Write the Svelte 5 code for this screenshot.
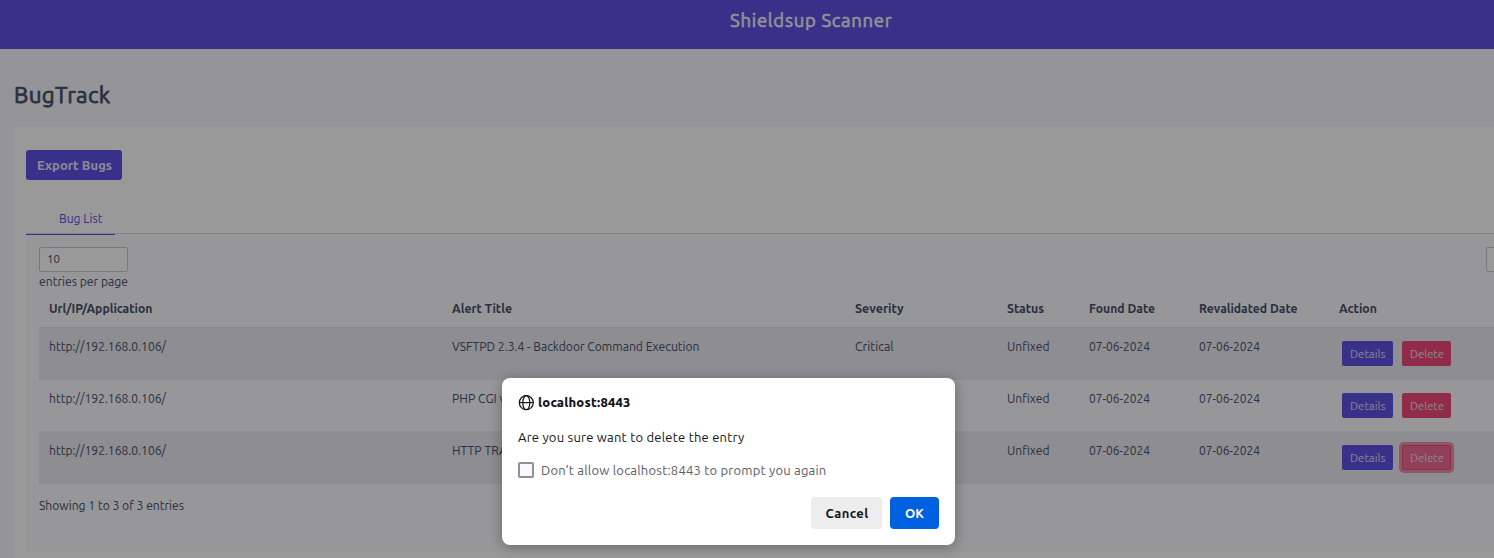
<script>
  const columns = [
    { label: 'Url/IP/Application', w: 103.5 },
    { label: 'Alert Title', w: 60 },
    { label: 'Severity', w: 48.5 },
    { label: 'Status', w: 37 },
    { label: 'Found Date', w: 66 },
    { label: 'Revalidated Date', w: 98.5 },
    { label: 'Action', w: 38 }
  ];
  const bugs = [
    { title: 'VSFTPD 2.3.4 - Backdoor Command Execution', w: 247.5, severity: 'Critical' },
    { title: 'PHP CGI v', w: 53.5, severity: '' },
    { title: 'HTTP TRA', w: 55, severity: '', focused: true }
  ];

  // Sets an element's text `width` pixels wide: short text is spaced out, long text is condensed.
  function fit(node, width) {
    const range = document.createRange();
    range.selectNodeContents(node);
    const natural = range.getBoundingClientRect().width;
    if (natural > width) {
      node.style.display = 'inline-block';
      node.style.transformOrigin = '0 50%';
      node.style.transform = `scaleX(${width / natural})`;
      node.style.marginRight = `${width - natural}px`;
    } else {
      node.style.letterSpacing = `${(width - natural) / node.textContent.length}px`;
    }
  }
</script>

<div class="page">
  <header><span use:fit={162.5}>Shieldsup Scanner</span></header>
  <main>
    <h1><span use:fit={96.5}>BugTrack</span></h1>
    <section class="card">
      <button class="export"><span use:fit={75}>Export Bugs</span></button>
      <nav><a class="tab" href="#bugs"><span use:fit={43.5}>Bug List</span></a></nav>
      <div class="panel">
        <div class="tools">
          <div class="length">
            <div class="select"><span use:fit={13}>10</span></div>
            <label><span use:fit={89}>entries per page</span></label>
          </div>
          <div class="search"></div>
        </div>
        <div class="row head">
          {#each columns as c}<div><span use:fit={c.w}>{c.label}</span></div>{/each}
        </div>
        {#each bugs as b, i}
          <div class="row body" class:odd={i % 2 === 0}>
            <div><span use:fit={117}>http://192.168.0.106/</span></div>
            <div><span use:fit={b.w}>{b.title}</span></div>
            <div>{#if b.severity}<span use:fit={38.5}>{b.severity}</span>{/if}</div>
            <div><span use:fit={42.5}>Unfixed</span></div>
            <div><span use:fit={61}>07-06-2024</span></div>
            <div><span use:fit={61}>07-06-2024</span></div>
            <div class="actions">
              <button class="details"><span use:fit={35.5}>Details</span></button>
              <button class="delete" class:focused={b.focused}><span use:fit={34}>Delete</span></button>
            </div>
          </div>
        {/each}
        <p class="info"><span use:fit={145}>Showing 1 to 3 of 3 entries</span></p>
      </div>
    </section>
  </main>
</div>

<div class="overlay">
  <div class="dialog">
    <div class="origin">
      <svg width="16" height="16" viewBox="0 0 16 16" fill="none" stroke="#15141a" stroke-width="1.2">
        <circle cx="8.3" cy="7.7" r="7" />
        <ellipse cx="8.3" cy="7.7" rx="3.5" ry="7" />
        <path d="M1.3 7.6H15.3" />
      </svg>
      <b><span use:fit={92.5}>localhost:8443</span></b>
    </div>
    <p class="message"><span use:fit={226.5}>Are you sure want to delete the entry</span></p>
    <label class="again">
      <i class="box"></i>
      <span use:fit={285.5}>Don’t allow localhost:8443 to prompt you again</span>
    </label>
    <div class="buttons">
      <button class="cancel"><span use:fit={43}>Cancel</span></button>
      <button class="ok"><span use:fit={19}>OK</span></button>
    </div>
  </div>
</div>

<style>
  :global(body) { margin: 0; overflow: hidden; }
  * { box-sizing: border-box; }
  .page, .overlay { font-family: Ubuntu, "Noto Sans", sans-serif; white-space: nowrap; }
  .page { width: 1494px; height: 558px; overflow: hidden; background: #f8f7fd; color: #475068; font-size: 13px; }
  button { font: inherit; border: 0; margin: 0; padding: 0; white-space: nowrap; }
  header { height: 49px; padding-left: 730px; line-height: 40px; font-size: 18.5px; -webkit-text-stroke: 0.55px; background: #5f51e6; color: #f4f4f8; }
  main { padding-left: 14px; }
  h1 { margin: 0; height: 78px; padding-top: 31px; line-height: 30px; font-size: 22.5px; font-weight: 400; -webkit-text-stroke: 0.75px; color: #465066; }
  .card { height: 440px; padding: 23px 0 0 12px; background: #fff; border-radius: 3px 0 0 0; }
  .export { display: block; width: 96px; height: 30px; padding-left: 1px; border-radius: 3px; background: #5f51e6; color: #e8e6f6; font-size: 13px; font-weight: 600; }
  nav { display: flex; margin-top: 22px; height: 33px; box-shadow: inset 0 -1px 0 #fbfaff, inset 0 -2px 0 #dddce2; }
  .tab { width: 89px; height: 33px; padding-left: 32.5px; line-height: 32px; color: #5f51e6; text-decoration: none; border-bottom: 1px solid #5f51e6; }
  .panel { height: 317px; padding: 12px 0 0 13px; background: #fcfbff; }
  .tools { display: flex; justify-content: space-between; height: 43px; }
  .select { width: 89px; height: 25px; padding-left: 7px; line-height: 22px; font-size: 12px; border: 1px solid #c9c8d2; border-radius: 2px; background: #fff; }
  .length label { display: block; line-height: 19px; }
  .search { width: 8px; height: 25px; border: 1px solid #c9c8d2; border-right: 0; border-radius: 2px 0 0 2px; background: #fff; }
  .row { display: grid; grid-template-columns: 403px 403px 152px 82px 110px 140px 1fr; }
  .row > div { padding-left: 10px; }
  .head { height: 37px; line-height: 36px; font-weight: 700; }
  .body { height: 52px; line-height: 38px; }
  .odd { background: #edecf2; }
  .odd:nth-child(3) { height: 53px; box-shadow: inset 0 1px 0 #e6e5eb; }
  .body:nth-child(4) { height: 51px; line-height: 36px; }
  .odd:nth-child(5) { height: 53px; }
  .row > .actions { display: flex; gap: 9px; padding: 14px 0 0 13px; line-height: 25px; }
  .body:nth-child(4) .actions { padding-top: 13px; }
  .details, .delete { height: 25px; border-radius: 2px; font-size: 12px; line-height: 25px; color: #e0def0; }
  .details { width: 51px; background: #5f51e6; }
  .delete { width: 49px; background: #f04a7c; color: #f4dce6; }
  .delete.focused { background: #f16c94; border: 1px solid #f04a7c; box-shadow: 0 0 0 3px #ee8fac; line-height: 23px; }
  .info { margin: 0; line-height: 43px; }

  .overlay { position: absolute; inset: 0; background: rgba(0, 0, 0, 0.4); font-size: 13px; color: #15141a; }
  .dialog { width: 453px; height: 167px; margin: 378px 0 0 502px; padding: 16px; border-radius: 8px; background: #fff; box-shadow: 0 2px 14px rgba(0, 0, 0, 0.3); }
  .origin { display: flex; align-items: center; gap: 4px; height: 17px; font-weight: 700; }
  .origin b { position: relative; top: -1px; }
  .message { margin: 16px 0 0; height: 20px; line-height: 20px; }
  .again { display: flex; align-items: center; gap: 7px; margin-top: 13px; height: 20px; color: #5b5b66; }
  .box { width: 16px; height: 16px; border: 2px solid #8f8f9d; border-radius: 2px; background: #f9f9fb; }
  .buttons { display: flex; justify-content: flex-end; gap: 8px; margin-top: 17px; }
  .buttons button { height: 32px; border-radius: 4px; font-weight: 700; }
  .buttons .cancel { width: 71px; padding-left: 1px; background: #ededed; color: #15141a; }
  .ok { width: 49px; background: #0061e0; color: #fbfbfe; }
</style>
